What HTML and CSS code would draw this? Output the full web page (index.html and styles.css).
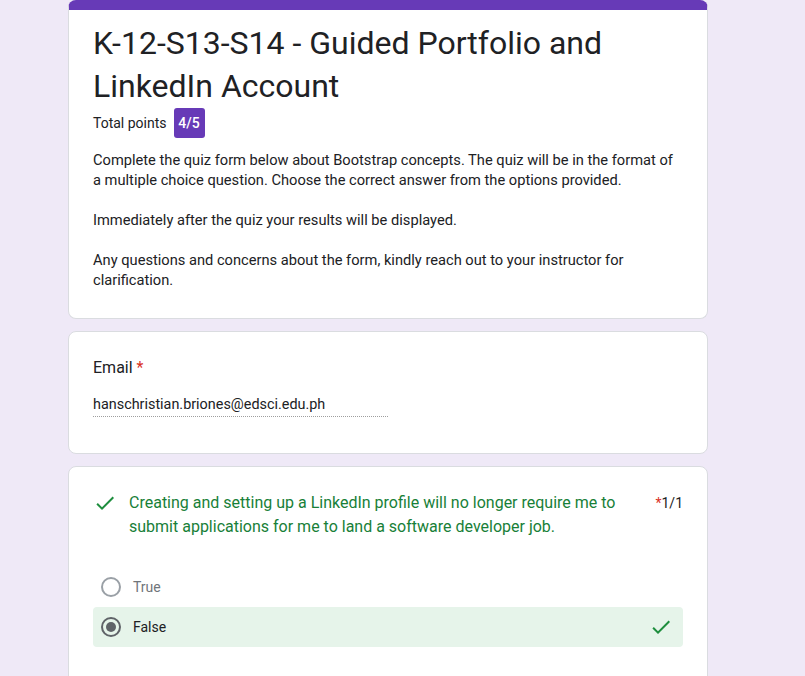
FILE: index.html
```html
<!DOCTYPE html>
<html>
<head>
<meta charset="utf-8">
<link rel="stylesheet" href="styles.css">
</head>
<body>
<main class="form">
  <section class="card header-card">
    <h1 class="title">K-12-S13-S14 - Guided Portfolio and LinkedIn Account</h1>
    <div class="points-row">
      <span class="points-label">Total points</span>
      <span class="badge">4/5</span>
    </div>
    <div class="desc">
      <p>Complete the quiz form below about Bootstrap concepts. The quiz will be in the format of a multiple choice question. Choose the correct answer from the options provided.</p>
      <p>Immediately after the quiz your results will be displayed.</p>
      <p>Any questions and concerns about the form, kindly reach out to your instructor for clarification.</p>
    </div>
  </section>

  <section class="card email-card">
    <div class="label">Email <span class="req">*</span></div>
    <div class="email-value">hanschristian.briones@edsci.edu.ph</div>
  </section>

  <section class="card question-card">
    <div class="q-head">
      <svg class="q-check" viewBox="0 0 24 24" width="24" height="24"><path d="M9 16.17L4.83 12l-1.42 1.41L9 19 21 7l-1.41-1.41z" fill="#1e8e3e"/></svg>
      <div class="q-text">Creating and setting up a LinkedIn profile will no longer require me to submit applications for me to land a software developer job.</div>
      <div class="q-score"><span class="req">*</span>1/1</div>
    </div>
    <div class="options">
      <div class="option">
        <span class="radio"></span>
        <span class="opt-text muted">True</span>
      </div>
      <div class="option correct">
        <span class="radio checked"></span>
        <span class="opt-text">False</span>
        <svg class="opt-check" viewBox="0 0 24 24" width="24" height="24"><path d="M9 16.17L4.83 12l-1.42 1.41L9 19 21 7l-1.41-1.41z" fill="#1e8e3e"/></svg>
      </div>
    </div>
  </section>
</main>
</body>
</html>
```

FILE: styles.css
```css
html, body {
  margin: 0;
  padding: 0;
}
body {
  background: #efe9f7;
  font-family: Roboto, "Liberation Sans", Arial, sans-serif;
  color: #202124;
  height: 676px;
  overflow: hidden;
}
.form {
  width: 640px;
  margin-left: 68px;
  display: flex;
  flex-direction: column;
  gap: 12px;
}
.card {
  background: #fff;
  border: 1px solid #dadce0;
  border-radius: 8px;
  padding: 24px;
}
.header-card {
  border-top: 10px solid #673ab7;
  padding-top: 12px;
  padding-bottom: 28px;
}
.title {
  margin: 0;
  font-weight: 400;
  font-size: 32px;
  line-height: 43px;
  color: #202124;
}
.points-row {
  display: flex;
  align-items: center;
  height: 30px;
  gap: 7px;
  font-size: 14px;
}
.badge {
  display: inline-flex;
  align-items: center;
  justify-content: center;
  width: 31px;
  height: 30px;
  background: #673ab7;
  color: #fff;
  border-radius: 3px;
  font-weight: 500;
  font-size: 14px;
}
.desc {
  margin-top: 12px;
  font-size: 14.67px;
  line-height: 20px;
}
.desc p {
  margin: 0 0 20px 0;
}
.desc p:last-child {
  margin-bottom: 0;
}
.email-card {
  padding-top: 24px;
  padding-bottom: 36px;
}
.label {
  font-size: 16px;
  line-height: 24px;
}
.req {
  color: #d93025;
}
.email-value {
  margin-top: 15px;
  width: 295px;
  font-size: 14.4px;
  line-height: 20px;
  border-bottom: 1px dotted #9e9e9e;
  padding-bottom: 1px;
}
.question-card {
  padding-top: 24px;
  padding-bottom: 40px;
}
.q-head {
  display: flex;
  align-items: flex-start;
}
.q-check {
  flex: none;
  margin-right: 12px;
}
.q-text {
  flex: 1;
  color: #188038;
  font-size: 16px;
  line-height: 24px;
}
.q-score {
  margin-left: 16px;
  font-size: 14px;
  line-height: 24px;
  color: #202124;
}
.options {
  margin-top: 28px;
  display: flex;
  flex-direction: column;
}
.option {
  display: flex;
  align-items: center;
  height: 40px;
  padding: 0 10px 0 8px;
  border-radius: 4px;
}
.option.correct {
  background: #e6f4ea;
}
.radio {
  width: 16px;
  height: 16px;
  border: 2px solid #9aa0a6;
  border-radius: 50%;
  margin-right: 12px;
  position: relative;
  flex: none;
}
.radio.checked {
  border-color: #5f6368;
}
.radio.checked::after {
  content: "";
  position: absolute;
  left: 3px;
  top: 3px;
  width: 10px;
  height: 10px;
  border-radius: 50%;
  background: #5f6368;
}
.opt-text {
  font-size: 14px;
  flex: 1;
}
.opt-text.muted {
  color: #70757a;
}
.opt-check {
  flex: none;
}
```
